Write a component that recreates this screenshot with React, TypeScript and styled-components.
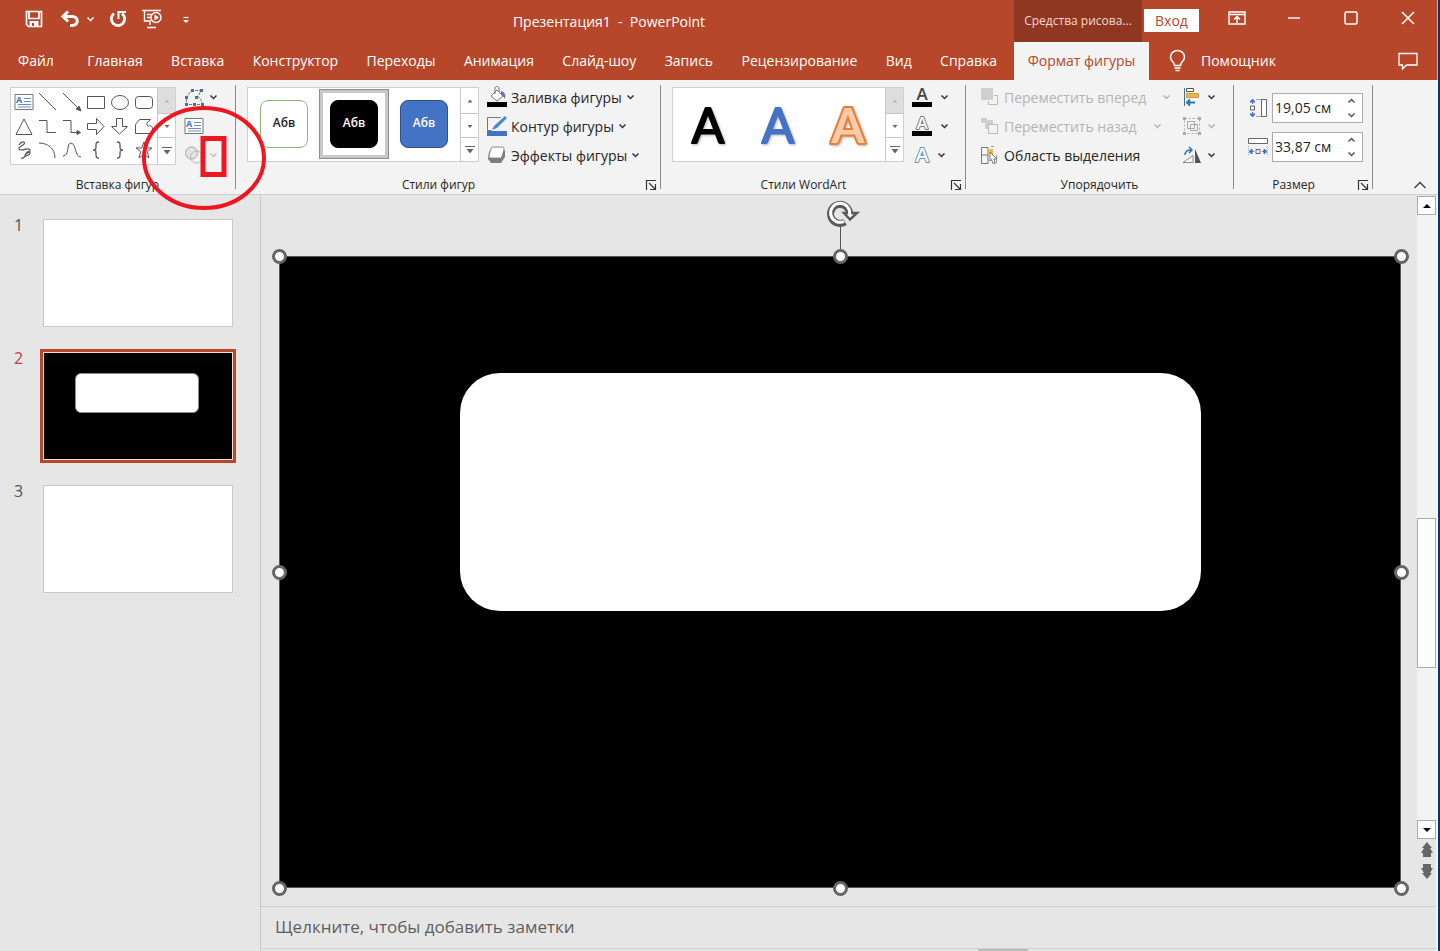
import React from "react";
import styled, { createGlobalStyle, css } from "styled-components";

const GlobalStyle = createGlobalStyle`
  *, *::before, *::after { box-sizing: border-box; }
  html, body { margin: 0; padding: 0; }
  body {
    font-family: "Open Sans", "Noto Sans", sans-serif;
    font-size: 14px;
    line-height: 20px;
    color: #262626;
    background: #e6e6e6;
  }
  button, input, textarea { font: inherit; color: inherit; margin: 0; }
  svg { display: block; flex: none; overflow: visible; }
`;

/* ---------- window ---------- */

const AppWindow = styled.div`
  position: relative;
  display: flex;
  flex-direction: column;
  min-height: 100vh;
  border-right: 2px solid #10316b;
  background: #e6e6e6;
`;

const PlainButton = styled.button`
  display: inline-flex;
  align-items: center;
  justify-content: center;
  padding: 0;
  border: 0;
  background: none;
`;

/* ---------- header ---------- */

const Header = styled.header`
  display: grid;
  grid-template-columns: minmax(0, 1014px) minmax(400px, 1fr);
  grid-template-rows: 42px 38px;
  background: #b7472a;
  color: #fff;
  border-right: 1px solid #e0a591;
`;

const TitleArea = styled.div`
  display: flex;
  align-items: flex-start;
`;

const QuickAccess = styled.div`
  display: flex;
  align-items: center;
  width: 204px;
  height: 38px;
  padding-left: 24px;
`;

const QuickButton = styled(PlainButton)<{ $w: number }>`
  gap: 6px;
  width: ${(p) => p.$w}px;
  height: 24px;
`;

const WindowTitle = styled.h1`
  flex: 1;
  margin: 0;
  text-align: center;
  font-size: 14px;
  font-weight: 400;
  line-height: 44px;
  white-space: pre;
`;

const WindowArea = styled.div`
  display: flex;
  align-items: flex-start;
`;

const ContextTitle = styled.div`
  width: 128px;
  height: 42px;
  padding: 0 8px;
  line-height: 41px;
  font-size: 12px;
  text-align: center;
  white-space: nowrap;
  color: #f3d8cf;
  background: #8f3721;
`;

const SignIn = styled(PlainButton)`
  width: 55px;
  height: 23px;
  margin: 9px 0 0 2px;
  background: #fff;
  color: #b7472a;
`;

const WindowControls = styled.div`
  display: flex;
  margin-left: auto;
  padding-right: 1px;
`;

const WindowButton = styled(PlainButton)`
  width: 57px;
  height: 36px;
`;

const TabList = styled.nav`
  display: flex;
  justify-content: space-between;
  padding: 0 4px 0 5px;
`;

const Tab = styled(PlainButton)<{ $active?: boolean; $first?: boolean }>`
  padding: 0 13px;
  white-space: nowrap;
  ${(p) => p.$first && css`margin-right: 5px;`}
  ${(p) =>
    p.$active &&
    css`
      width: 135px;
      background: #f3f3f3;
      color: #b7472a;
    `}
`;

const TabArea = styled.div`
  display: flex;
  align-items: stretch;
  padding-right: 1px;
`;

const Helper = styled(PlainButton)`
  gap: 15px;
  margin-left: 20px;
`;

const CommentButton = styled(WindowButton)`
  margin-left: auto;
  height: 38px;
`;

/* ---------- ribbon ---------- */

const Ribbon = styled.section`
  display: flex;
  height: 115px;
  background: #f3f3f3;
  border-bottom: 1px solid #d0d0d0;
`;

const GroupBox = styled.div<{ $w: number }>`
  display: flex;
  flex-direction: column;
  justify-content: space-between;
  flex: none;
  width: ${(p) => p.$w}px;
  margin: 5px 0;
  border-right: 1px solid #8a8a8a;
`;

const GroupBody = styled.div<{ $pad: number }>`
  display: flex;
  align-items: flex-start;
  padding: 2px 0 0 ${(p) => p.$pad}px;
`;

const GroupFooter = styled.div`
  display: flex;
  align-items: center;
  height: 9px;
  font-size: 12px;
  line-height: 16px;
`;

const GroupName = styled.span`
  flex: 1;
  text-align: center;
`;

const Launcher = styled(PlainButton)`
  width: 19px;
  height: 18px;
`;

const GalleryBox = styled.div<{ $w: number; $h: number }>`
  display: flex;
  width: ${(p) => p.$w}px;
  height: ${(p) => p.$h}px;
  border: 1px solid #d0d0d0;
  background: #fff;
`;

const GalleryScroll = styled.div`
  display: grid;
  grid-template-rows: 25px 24px 1fr;
  width: 18px;
  border-left: 1px solid #c6c6c6;
`;

const ScrollStep = styled(PlainButton)<{ $off?: boolean }>`
  background: ${(p) => (p.$off ? "#dedede" : "#fff")};
  & + & { border-top: 1px solid #c6c6c6; }
`;

const ShapeGrid = styled.div`
  flex: 1;
  display: grid;
  grid-template-columns: repeat(6, 24px);
  grid-auto-rows: 24px;
  align-content: center;
  justify-content: center;
`;

const ToolColumn = styled.div<{ $gap: number }>`
  display: flex;
  flex-direction: column;
  align-items: flex-start;
  gap: 9px;
  margin-left: ${(p) => p.$gap}px;
`;

const Tool = styled(PlainButton)<{ $spread?: number }>`
  gap: ${(p) => p.$spread ?? 4}px;
  height: 20px;
  white-space: nowrap;
  &:disabled { color: #b3b3b3; }
`;

const ToolText = styled.span`
  padding-top: 2px;
`;

const SplitTool = styled.div`
  display: flex;
  gap: 16px;
`;

const StyleTiles = styled.div`
  flex: 1;
  display: flex;
  align-items: flex-start;
  padding: 1px 0 0 1px;
`;

const TileFrame = styled(PlainButton)<{ $on?: boolean }>`
  width: 70px;
  height: 70px;
  border: ${(p) => (p.$on ? "1px solid #8c8c8c" : "0")};
  box-shadow: ${(p) => (p.$on ? "inset 0 0 0 3px #c9c9c9" : "none")};
`;

const Tile = styled.span<{ $bg: string; $fg: string; $line: string }>`
  width: 48px;
  height: 48px;
  border: 1px solid ${(p) => p.$line};
  border-radius: 8px;
  background: ${(p) => p.$bg};
  color: ${(p) => p.$fg};
  font-size: 12px;
  font-weight: 600;
  line-height: 44px;
`;

const ArtTiles = styled.div`
  flex: 1;
  display: flex;
  align-items: center;
`;

const SizeRows = styled.div`
  display: flex;
  flex-direction: column;
  gap: 9px;
  padding-top: 6px;
`;

const SizeRow = styled.label`
  display: flex;
  align-items: center;
  gap: 4px;
`;

const Spinner = styled.span`
  display: flex;
  width: 91px;
  height: 30px;
  border: 1px solid #ababab;
  background: #fff;
`;

const SpinnerInput = styled.input`
  width: 68px;
  padding: 0 0 0 2px;
  border: 0;
  background: none;
  outline: 0;
`;

const SpinnerSteps = styled.span`
  display: grid;
  grid-template-rows: 1fr 1fr;
  flex: 1;
`;

const Collapse = styled(PlainButton)`
  align-self: flex-end;
  width: 32px;
  height: 18px;
  margin: 0 2px 0 auto;
`;

/* ---------- work area ---------- */

const Workspace = styled.div`
  flex: 1;
  display: flex;
  border-right: 2px solid #f4f4f4;
`;

const ThumbPane = styled.aside`
  width: 261px;
  flex: none;
  padding-top: 21px;
  border-right: 1px solid #c8c8c8;
`;

const ThumbList = styled.ol`
  display: flex;
  flex-direction: column;
  gap: 19px;
  margin: 0;
  padding: 0;
  list-style: none;
`;

const ThumbItem = styled.li<{ $on?: boolean }>`
  display: flex;
  gap: 16px;
  padding-left: 14px;
  font-size: 16px;
  color: ${(p) => (p.$on ? "#c43e3e" : "#555")};
`;

const ThumbNumber = styled.span`
  width: 10px;
  line-height: 18px;
`;

const ThumbFrame = styled(PlainButton)<{ $on?: boolean }>`
  width: 196px;
  height: 114px;
  border: 3px solid ${(p) => (p.$on ? "#b7472a" : "transparent")};
`;

const ThumbSlide = styled.span<{ $on?: boolean }>`
  width: 190px;
  height: 108px;
  padding: 20px 31px;
  border: 1px solid ${(p) => (p.$on ? "#f5dcd4" : "#c8c8c8")};
  background: ${(p) => (p.$on ? "#000" : "#fff")};
`;

const ThumbShape = styled.span`
  display: block;
  width: 124px;
  height: 40px;
  border: 1px solid #8c8c8c;
  border-radius: 6px;
  background: #fff;
`;

const EditPane = styled.main`
  flex: 1;
  min-width: 0;
  display: flex;
  flex-direction: column;
`;

const StageRow = styled.div`
  flex: 1;
  display: flex;
`;

const Stage = styled.div`
  flex: 1;
  display: flex;
  padding: 61px 16px 18px 18px;
`;

const Slide = styled.div`
  position: relative;
  flex: 1;
  background: #000;
  box-shadow: inset 0 0 0 1px #555;
`;

const SlideShape = styled.div`
  position: absolute;
  left: 16.1%;
  top: 18.5%;
  width: 66.1%;
  height: 37.7%;
  border-radius: 40px;
  background: #fff;
`;

const Handle = styled.span<{ $x: number; $y: number }>`
  position: absolute;
  left: ${(p) => p.$x}%;
  top: ${(p) => p.$y}%;
  width: 15px;
  height: 15px;
  margin: -7px 0 0 -7px;
  border: 3px solid #666;
  border-radius: 50%;
  background: #fff;
`;

const Rotator = styled.span`
  position: absolute;
  left: 50%;
  top: -57px;
  margin-left: -14px;
`;

const ScrollBar = styled.div`
  display: flex;
  flex-direction: column;
  width: 19px;
  padding: 1px 0 25px;
`;

const ScrollTrack = styled.div`
  flex: 1;
  padding-top: 303px;
  background: #f3f3f3;
`;

const ScrollThumb = styled.div`
  height: 150px;
  border: 1px solid #ababab;
  background: #fff;
`;

const ScrollArrow = styled(PlainButton)`
  height: 19px;
  border: 1px solid #ababab;
  background: #fff;
`;

const JumpButton = styled(PlainButton)`
  height: 21px;
`;

const Notes = styled.textarea`
  display: block;
  width: 100%;
  height: 43px;
  padding: 9px 14px;
  border: 0;
  border-top: 1px solid #cfcfcf;
  border-bottom: 1px solid #cfcfcf;
  background: #e6e6e6;
  font-size: 17px;
  line-height: 22px;
  resize: none;
  outline: 0;
  overflow: hidden;
  &::placeholder { color: #5f5f5f; opacity: 1; }
`;

const BottomEdge = styled.div`
  height: 2px;
  padding-left: 717px;
`;

const BottomGrip = styled.div`
  width: 50px;
  height: 2px;
  background: #bcbcbc;
`;

const Annotation = styled.svg`
  position: absolute;
  left: 140px;
  top: 104px;
  pointer-events: none;
`;

/* ---------- drawings ---------- */

type DrawProps = {
  w?: number;
  h?: number;
  stroke?: string;
  sw?: number;
  children: React.ReactNode;
};

const Draw = ({ w = 20, h = 20, stroke = "#555", sw = 1, children }: DrawProps) => (
  <svg width={w} height={h} viewBox={`0 0 ${w} ${h}`} fill="none" stroke={stroke} strokeWidth={sw} aria-hidden="true">
    {children}
  </svg>
);

const Chevron = ({ color = "#333", up = false }: { color?: string; up?: boolean }) => (
  <Draw w={9} h={8} stroke={color} sw={1.5}>
    <path d={up ? "M1.5 5.5l3-3 3 3" : "M1.5 2.5l3 3 3-3"} />
  </Draw>
);

const Caret = ({ color = "#666", up = false, bar = false }: { color?: string; up?: boolean; bar?: boolean }) => (
  <Draw w={10} h={10} stroke="none">
    {bar && <path d="M0 1h10v1H0z" fill={color} />}
    <path
      d={bar ? "M1.5 4h7L5 8.500z" : up ? "M2.500 6.500h5L5 3.500z" : "M2.500 4h5L5 7z"}
      fill={color}
    />
  </Draw>
);

const TextBoxIcon = () => (
  <Draw>
    <path d="M1 2.500h18v15H1z" fill="#fff" stroke="#777" />
    <text x="2" y="11" fontSize="9" fontWeight="700" fill="#4472c4" stroke="none">A</text>
    <path d="M10 6.500h7M10 9.500h7M4 12.500h13M4 15h13" stroke="#6f8fc4" />
  </Draw>
);

const shapes: [string, React.ReactNode][] = [
  ["Надпись", <TextBoxIcon />],
  ["Линия", <Draw><path d="M1 1l17 17" /></Draw>],
  ["Стрелка", <Draw><path d="M1 1l17 17" /><path d="M19 19l-5-2 3-3z" fill="#555" /></Draw>],
  ["Прямоугольник", <Draw><path d="M1.500 4.500h17v12h-17z" /></Draw>],
  ["Овал", <Draw><ellipse cx="10" cy="10.500" rx="8.500" ry="7" /></Draw>],
  ["Скругленный прямоугольник", <Draw><rect x="1.500" y="4.500" width="17" height="12" rx="3" /></Draw>],
  ["Треугольник", <Draw><path d="M10 3l8 15.500H2z" /></Draw>],
  ["Уступ", <Draw><path d="M1 4.500h8v12h9" /></Draw>],
  ["Уступ со стрелкой", <Draw><path d="M1 4.500h8v12h9" /><path d="M18.500 16.500l-3.500-2v4z" fill="#555" /></Draw>],
  ["Стрелка вправо", <Draw><path d="M1.500 7.500h9V2.500l7.500 8-7.500 8v-5h-9z" /></Draw>],
  ["Стрелка вниз", <Draw><path d="M6.500 2.500h6v8h5l-8 7.500-8-7.500h5z" /></Draw>],
  ["Полилиния", <Draw><path d="M1.500 17.500v-9l4-5h11c-4 3-5 6-2 6.500 3-1 4 1 4 3v4.500z" /></Draw>],
  ["Каракули", <Draw sw={1.2}><path d="M5 5c3-5 8-3 4 0-4 2-6 4-2 5 5 0 8-3 9 0s-5 3-5 5 5 0 5-2-3-2-4 1-2 5-5 4" /></Draw>],
  ["Дуга", <Draw><path d="M1 3c8 0 16 5 16 15" /></Draw>],
  ["Кривая", <Draw><path d="M1 16c7 0 3-13 8-13s4 15 10 14" /></Draw>],
  ["Левая фигурная скобка", <Draw><path d="M13 2c-3 0-3 1-3 4s0 4-3 4c3 0 3 1 3 4s0 4 3 4" strokeWidth="1.300" /></Draw>],
  ["Правая фигурная скобка", <Draw><path d="M7 2c3 0 3 1 3 4s0 4 3 4c-3 0-3 1-3 4s0 4-3 4" strokeWidth="1.300" /></Draw>],
  ["Звезда", <Draw><path d="M10 2l2.200 6H18l-4.700 3.600L15 18l-5-4-5 4 1.700-6.400L2 8h5.800z" /></Draw>],
];

const EditShapeIcon = () => (
  <Draw>
    <path d="M7 3.500h10l-3 6c2 1 4 4 4 8H2.500v-7z" stroke="#777" strokeDasharray="3 1" />
    <path d="M7 2h3v3H7zM16 2h3v3h-3zM1 9h3v3H1zM11 9h3v3h-3zM1 16h3v3H1zM9 16h3v3H9zM17 16h3v3h-3z" fill="#41719c" stroke="none" />
  </Draw>
);

const MergeIcon = () => (
  <Draw stroke="#b8b8b8">
    <circle cx="7.500" cy="8" r="6" fill="#e4e4e4" />
    <circle cx="12.500" cy="12" r="6" />
    <circle cx="7.500" cy="8" r="6" />
  </Draw>
);

const FillIcon = () => (
  <Draw>
    <path d="M4 9l6-6 6 6-6 5z" fill="#fff" stroke="#777" />
    <path d="M8 7V1c0-2 4-2 4 0v4" stroke="#777" />
    <path d="M14 4c4 1 5 4 4 8-1-2-2-3-4-4z" fill="#8064b8" stroke="none" />
    <path d="M0 15h20v5H0z" fill="#000" stroke="none" />
  </Draw>
);

const OutlineIcon = () => (
  <Draw>
    <path d="M14 1.500H.5v13h4" stroke="#777" />
    <path d="M5 14l2-4L18 0l2 2L10 12z" fill="#4a8cc8" stroke="none" />
    <path d="M0 15h20v5H0z" fill="#4472c4" stroke="none" />
  </Draw>
);

const EffectsIcon = () => (
  <Draw>
    <path d="M6 3h9l3 3v6l-4 6H4l-3-4 1-7z" fill="#7d7d7d" stroke="none" />
    <path d="M7 2h8c2 0 2 1 2 3l-2 6c0 2-1 2-3 2H4c-2 0-2-1-2-3l2-6c0-2 1-2 3-2z" fill="#fff" stroke="#888" />
  </Draw>
);

const LauncherIcon = () => (
  <Draw w={12} h={12} stroke="#333">
    <path d="M1.500 11V1.500H11M4 4l6 6M10.500 5v5.500H5" strokeWidth="1.200" />
  </Draw>
);

const LetterIcon = ({ kind }: { kind: "fill" | "outline" | "glow" }) => (
  <Draw>
    <text
      x="10"
      y={kind === "glow" ? 17 : 13}
      fontSize={kind === "glow" ? 20 : 17}
      fontWeight={600}
      textAnchor="middle"
      paintOrder="stroke"
      fill={kind === "fill" ? "#444" : "#fff"}
      stroke={kind === "fill" ? "none" : kind === "outline" ? "#777" : "#5b92cb"}
      strokeWidth={2}
      strokeLinejoin="round"
    >
      A
    </text>
    {kind !== "glow" && <path d="M0 15h20v5H0z" fill="#000" stroke="none" />}
  </Draw>
);

type ArtProps = { fill: string; line: string; sw: number; weight?: number };

const ArtLetter = ({ fill, line, sw, weight = 400 }: ArtProps) => (
  <svg width="70" height="60" viewBox="0 0 70 60" aria-hidden="true">
    <text
      x="35"
      y="48"
      fontFamily="Lato, sans-serif"
      fontSize="48"
      fontWeight={weight}
      textAnchor="middle"
      paintOrder="stroke"
      fill={fill}
      stroke={line}
      strokeWidth={sw}
      strokeLinejoin="round"
      style={{ filter: "drop-shadow(1px 1px 1px rgba(0,0,0,.3))" }}
    >
      A
    </text>
  </svg>
);

const ForwardIcon = () => (
  <Draw stroke="#bdbdbd">
    <path d="M14 8.500h3.500v9h-9V14" />
    <path d="M1 1h12v12H1z" fill="#cfcfcf" stroke="none" />
  </Draw>
);

const BackwardIcon = () => (
  <Draw stroke="#bdbdbd">
    <path d="M1 2h6v5H1zM5 4h8v9H5z" fill="#cfcfcf" stroke="none" />
    <path d="M8.500 8.500h9v9h-9z" fill="#f3f3f3" />
  </Draw>
);

const SelectionIcon = () => (
  <Draw>
    <path d="M8 18.500H1.500v-16H8v16M1.500 10H8" stroke="#777" />
    <path d="M8 4h5v5H8z" fill="#f0b94d" stroke="none" />
    <path d="M11 1.500h3M16.500 10v8H13" stroke="#999" />
    <path d="M10 7l7 7h-3l1 4-2 .5-1.500-4L10 16z" fill="#fff" stroke="#777" />
  </Draw>
);

const AlignIcon = () => (
  <Draw>
    <path d="M2.500 1v18" stroke="#41719c" />
    <path d="M4.500 1.500h7v3h-7z" stroke="#555" fill="#fff" />
    <path d="M4.500 6.500h12v4h-12z" fill="#edb54a" stroke="#c99a3c" />
    <path d="M13 15.500H5M8 12.500l-3 3 3 3" stroke="#2f75b5" strokeWidth="2" />
  </Draw>
);

const GroupIcon = () => (
  <Draw stroke="#a8a8a8">
    <path d="M2.500 2.500h15v15h-15z" strokeDasharray="2 2" />
    <path d="M5.500 5.500h7v7h-7zM8.500 8.500h7v6h-7z" />
    <path d="M1 1h3v3H1zM16 1h3v3h-3zM1 16h3v3H1zM16 16h3v3h-3z" fill="#a8a8a8" stroke="none" />
  </Draw>
);

const RotateIcon = () => (
  <Draw>
    <path d="M1 17.500h10v-7z" fill="#fff" stroke="#888" />
    <path d="M13 4l6 14h-6z" fill="#555" stroke="none" />
    <path d="M3 10c0-4 2-5 6-5M7 2l3 3-3 3" stroke="#2f75b5" strokeWidth="1.500" />
  </Draw>
);

const HeightIcon = () => (
  <Draw>
    <path d="M8 1.500h11M8 18.500h11" stroke="#9ab" />
    <path d="M13.500 1.500h5v17h-5z" stroke="#666" fill="#fff" />
    <path d="M2.500 8h4v4h-4z" stroke="#666" />
    <path d="M4.500 6V2M2 4l2.500-3L7 4zM4.500 14v4M2 16l2.500 3L7 16z" stroke="#4472c4" fill="#4472c4" />
  </Draw>
);

const WidthIcon = () => (
  <Draw>
    <path d="M.5 1.500h19v5H.5z" stroke="#666" fill="#fff" />
    <path d="M.5 9v9M19.500 9v9" stroke="#9ab" strokeDasharray="1 1" />
    <path d="M8 12.500h4v4H8z" stroke="#666" />
    <path d="M6 14.500H2M4 12l-3 2.500L4 17zM14 14.500h4M16 12l3 2.500-3 2.500z" stroke="#4472c4" fill="#4472c4" />
  </Draw>
);

/* ---------- composite parts ---------- */

const Group = ({ w, pad, name, launcher, children }: {
  w: number;
  pad: number;
  name: string;
  launcher?: boolean;
  children: React.ReactNode;
}) => (
  <GroupBox $w={w} role="group" aria-label={name}>
    <GroupBody $pad={pad}>{children}</GroupBody>
    <GroupFooter>
      <GroupName>{name}</GroupName>
      {launcher && <Launcher aria-label={`${name}: параметры`}><LauncherIcon /></Launcher>}
    </GroupFooter>
  </GroupBox>
);

const Gallery = ({ w, h, topOff, children }: { w: number; h: number; topOff?: boolean; children: React.ReactNode }) => (
  <GalleryBox $w={w} $h={h}>
    {children}
    <GalleryScroll>
      <ScrollStep $off={topOff} aria-label="Вверх"><Caret up color={topOff ? "#b5b5b5" : "#666"} /></ScrollStep>
      <ScrollStep aria-label="Вниз"><Caret /></ScrollStep>
      <ScrollStep aria-label="Еще"><Caret bar /></ScrollStep>
    </GalleryScroll>
  </GalleryBox>
);

const SizeField = ({ label, value, icon }: { label: string; value: string; icon: React.ReactNode }) => (
  <SizeRow>
    {icon}
    <Spinner>
      <SpinnerInput aria-label={label} defaultValue={value} />
      <SpinnerSteps>
        <PlainButton aria-label={`${label}: больше`}><Chevron up color="#555" /></PlainButton>
        <PlainButton aria-label={`${label}: меньше`}><Chevron color="#555" /></PlainButton>
      </SpinnerSteps>
    </Spinner>
  </SizeRow>
);

const tabs = [
  "Файл", "Главная", "Вставка", "Конструктор", "Переходы", "Анимация",
  "Слайд-шоу", "Запись", "Рецензирование", "Вид", "Справка",
];

const handles = [
  [0, 0], [50, 0], [100, 0],
  [0, 50], [100, 50],
  [0, 100], [50, 100], [100, 100],
];

export default function App() {
  return (
    <>
      <GlobalStyle />
      <AppWindow>
        <Header>
          <TitleArea>
            <QuickAccess>
              <QuickButton $w={20} aria-label="Сохранить">
                <Draw w={18} h={18} stroke="#fff" sw={1.7}>
                  <path d="M1.500 1.500h15v15h-13l-2-2zM4 2v6.500h10V2" />
                  <path d="M4.500 11h9v6h-9z" fill="#fff" stroke="none" />
                  <path d="M7 13h2v3H7z" fill="#b7472a" stroke="none" />
                </Draw>
              </QuickButton>
              <QuickButton $w={66} aria-label="Отменить">
                <Draw w={20} h={18} stroke="#fff" sw={3}>
                  <path d="M3 6.500h9c7 0 7 9 0 9h-2M8 1.500l-5 5 5 5" />
                </Draw>
                <Chevron color="#fff" />
              </QuickButton>
              <QuickButton $w={16} aria-label="Повторить">
                <Draw w={18} h={18} stroke="#fff" sw={2.8}>
                  <path d="M5 3.500a6.700 6.700 0 1 0 8 0" />
                  <path d="M9.500 9V2H17" strokeWidth="2" />
                </Draw>
              </QuickButton>
              <QuickButton $w={52} aria-label="Показ слайдов">
                <Draw w={20} h={20} stroke="#fff" sw={1.4}>
                  <path d="M0 1.500h19M2.500 2v10H9M5 5.500h5M5 8.500h4M8 13v3M5 18.500h9" />
                  <circle cx="14" cy="8.500" r="5" />
                  <path d="M12.500 5.500l4.500 3-4.500 3z" fill="#fff" stroke="none" />
                </Draw>
              </QuickButton>
              <QuickButton $w={16} aria-label="Настройка панели">
                <Draw w={8} h={10} stroke="#fff" sw={1.2}>
                  <path d="M1.500 3.500h5" />
                  <path d="M1 6h6L4 9z" fill="#fff" stroke="none" />
                </Draw>
              </QuickButton>
            </QuickAccess>
            <WindowTitle>{"Презентация1  -  PowerPoint"}</WindowTitle>
          </TitleArea>
          <WindowArea>
            <ContextTitle>Средства рисова...</ContextTitle>
            <SignIn>Вход</SignIn>
            <WindowControls>
              <WindowButton aria-label="Параметры ленты">
                <Draw w={18} h={14} stroke="#fff" sw={1.4}>
                  <path d="M1 1h16v12H1zM1 3.500h16M9 12V5.500M6 8.500l3-3 3 3" />
                </Draw>
              </WindowButton>
              <WindowButton aria-label="Свернуть">
                <Draw w={14} h={14} stroke="#fff" sw={1.4}><path d="M1 7h12" /></Draw>
              </WindowButton>
              <WindowButton aria-label="Развернуть">
                <Draw w={14} h={14} stroke="#fff" sw={1.5}><rect x="1" y="1" width="12" height="12" rx="1.500" /></Draw>
              </WindowButton>
              <WindowButton aria-label="Закрыть">
                <Draw w={14} h={14} stroke="#fff" sw={1.5}><path d="M1 1l12 12M13 1L1 13" /></Draw>
              </WindowButton>
            </WindowControls>
          </WindowArea>
          <TabList>
            {tabs.map((t, i) => <Tab key={t} $first={i === 0}>{t}</Tab>)}
          </TabList>
          <TabArea>
            <Tab $active>Формат фигуры</Tab>
            <Helper>
              <Draw w={17} h={22} stroke="#fff" sw={1.5}>
                <path d="M5.500 15.500c0-4-4-4-4-8.500a7 6.500 0 0 1 14 0c0 4.500-4 4.500-4 8.500zM5.500 18h6M6.500 20.500h4" />
              </Draw>
              Помощник
            </Helper>
            <CommentButton aria-label="Примечания">
              <Draw w={20} h={18} stroke="#fff" sw={1.3}>
                <path d="M1 1.500h18v11.500H8.500l-4 4v-4H1z" />
              </Draw>
            </CommentButton>
          </TabArea>
        </Header>

        <Ribbon>
          <Group w={236} pad={10} name="Вставка фигур">
            <Gallery w={166} h={78} topOff>
              <ShapeGrid>
                {shapes.map(([label, icon]) => (
                  <PlainButton key={label} aria-label={label}>{icon}</PlainButton>
                ))}
              </ShapeGrid>
            </Gallery>
            <ToolColumn $gap={8}>
              <Tool $spread={5} aria-label="Изменить фигуру"><EditShapeIcon /><Chevron /></Tool>
              <Tool aria-label="Надпись"><TextBoxIcon /></Tool>
              <Tool $spread={5} disabled aria-label="Объединить фигуры"><MergeIcon /><Chevron color="#c2c2c2" /></Tool>
            </ToolColumn>
          </Group>

          <Group w={425} pad={11} name="Стили фигур" launcher>
            <Gallery w={232} h={75}>
              <StyleTiles>
                <TileFrame><Tile $bg="#fff" $fg="#222" $line="#8fb573">Абв</Tile></TileFrame>
                <TileFrame $on><Tile $bg="#000" $fg="#fff" $line="#000">Абв</Tile></TileFrame>
                <TileFrame><Tile $bg="#4472c4" $fg="#fff" $line="#2f528f">Абв</Tile></TileFrame>
              </StyleTiles>
            </Gallery>
            <ToolColumn $gap={8}>
              <Tool><FillIcon /><ToolText>Заливка фигуры</ToolText><Chevron /></Tool>
              <Tool><OutlineIcon /><ToolText>Контур фигуры</ToolText><Chevron /></Tool>
              <Tool><EffectsIcon /><ToolText>Эффекты фигуры</ToolText><Chevron /></Tool>
            </ToolColumn>
          </Group>

          <Group w={305} pad={11} name="Стили WordArt" launcher>
            <Gallery w={232} h={75} topOff>
              <ArtTiles>
                <PlainButton aria-label="Черная заливка"><ArtLetter fill="#000" line="#000" sw={2} /></PlainButton>
                <PlainButton aria-label="Синяя заливка"><ArtLetter fill="#4472c4" line="#4472c4" sw={2} /></PlainButton>
                <PlainButton aria-label="Оранжевый контур"><ArtLetter fill="#f8cbad" line="#ed7d31" sw={4} weight={700} /></PlainButton>
              </ArtTiles>
            </Gallery>
            <ToolColumn $gap={8}>
              <Tool $spread={8} aria-label="Заливка текста"><LetterIcon kind="fill" /><Chevron /></Tool>
              <Tool $spread={8} aria-label="Контур текста"><LetterIcon kind="outline" /><Chevron /></Tool>
              <Tool $spread={5} aria-label="Текстовые эффекты"><LetterIcon kind="glow" /><Chevron /></Tool>
            </ToolColumn>
          </Group>

          <Group w={268} pad={14} name="Упорядочить">
            <ToolColumn $gap={0}>
              <SplitTool>
                <Tool disabled><ForwardIcon /><ToolText>Переместить вперед</ToolText></Tool>
                <Tool disabled aria-label="Варианты: вперед"><Chevron color="#b3b3b3" /></Tool>
              </SplitTool>
              <SplitTool>
                <Tool disabled><BackwardIcon /><ToolText>Переместить назад</ToolText></Tool>
                <Tool disabled aria-label="Варианты: назад"><Chevron color="#b3b3b3" /></Tool>
              </SplitTool>
              <Tool><SelectionIcon /><ToolText>Область выделения</ToolText></Tool>
            </ToolColumn>
            <ToolColumn $gap={11}>
              <Tool $spread={5} aria-label="Выровнять"><AlignIcon /><Chevron /></Tool>
              <Tool $spread={5} disabled aria-label="Группировать"><GroupIcon /><Chevron color="#b3b3b3" /></Tool>
              <Tool $spread={5} aria-label="Повернуть"><RotateIcon /><Chevron /></Tool>
            </ToolColumn>
          </Group>

          <Group w={139} pad={14} name="Размер" launcher>
            <SizeRows>
              <SizeField label="Высота" value="19,05 см" icon={<HeightIcon />} />
              <SizeField label="Ширина" value="33,87 см" icon={<WidthIcon />} />
            </SizeRows>
          </Group>

          <Collapse aria-label="Свернуть ленту">
            <Draw w={14} h={10} stroke="#444" sw={1.5}><path d="M1.500 8L7 2.500 12.500 8" /></Draw>
          </Collapse>
        </Ribbon>

        <Workspace>
          <ThumbPane aria-label="Слайды">
            <ThumbList>
              {[1, 2, 3].map((n) => (
                <ThumbItem key={n} $on={n === 2}>
                  <ThumbNumber>{n}</ThumbNumber>
                  <ThumbFrame $on={n === 2} aria-label={`Слайд ${n}`}>
                    <ThumbSlide $on={n === 2}>{n === 2 && <ThumbShape />}</ThumbSlide>
                  </ThumbFrame>
                </ThumbItem>
              ))}
            </ThumbList>
          </ThumbPane>
          <EditPane>
            <StageRow>
              <Stage>
                <Slide>
                  <SlideShape />
                  <Rotator>
                    <Draw w={34} h={57}>
                      <path d="M14.500 27v25" />
                      <path d="M19 23A9.500 9.500 0 1 1 23.500 14" stroke="#5a5a5a" strokeWidth="7" />
                      <path d="M18 14h13l-7 6.500z" fill="#fff" stroke="#5a5a5a" strokeWidth="2.500" />
                      <path d="M18 22.500A9.500 9.500 0 1 1 23.500 15.500" stroke="#fff" strokeWidth="3" />
                    </Draw>
                  </Rotator>
                  {handles.map(([x, y]) => <Handle key={`${x}-${y}`} $x={x} $y={y} />)}
                </Slide>
              </Stage>
              <ScrollBar>
                <ScrollArrow aria-label="Прокрутить вверх">
                  <Draw w={10} h={6} stroke="none"><path d="M1 5h8L5 1z" fill="#000" /></Draw>
                </ScrollArrow>
                <ScrollTrack><ScrollThumb /></ScrollTrack>
                <ScrollArrow aria-label="Прокрутить вниз">
                  <Draw w={10} h={6} stroke="none"><path d="M1 1h8L5 5z" fill="#000" /></Draw>
                </ScrollArrow>
                <JumpButton aria-label="Предыдущий слайд">
                  <Draw w={12} h={16} stroke="none"><path d="M6 0l5 6H9l3 5h-2v4H2v-4H0l3-5H1z" fill="#666" /></Draw>
                </JumpButton>
                <JumpButton aria-label="Следующий слайд">
                  <Draw w={12} h={16} stroke="none"><path d="M6 16l5-6H9l3-5h-2V1H2v4H0l3 5H1z" fill="#666" /></Draw>
                </JumpButton>
              </ScrollBar>
            </StageRow>
            <Notes aria-label="Заметки" placeholder="Щелкните, чтобы добавить заметки" />
            <BottomEdge><BottomGrip /></BottomEdge>
          </EditPane>
        </Workspace>

        <Annotation width="128" height="108" viewBox="0 0 128 108" fill="none" stroke="#ee1620" aria-hidden="true">
          <ellipse cx="64" cy="54" rx="60" ry="50" strokeWidth="4" />
          <rect x="63" y="34.500" width="21" height="36" strokeWidth="5" />
        </Annotation>
      </AppWindow>
    </>
  );
}
